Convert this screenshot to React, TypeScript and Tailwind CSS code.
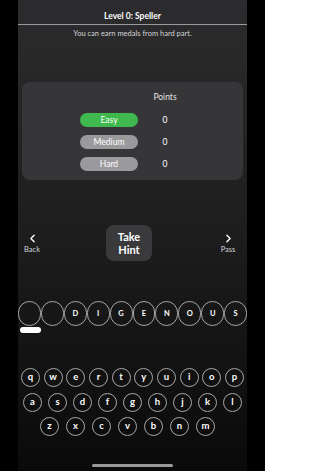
import { ChevronLeft, ChevronRight } from "lucide-react";

const FONT = { fontFamily: "Lato, 'Noto Sans', sans-serif" };

const SLOTS = ["", "", "D", "I", "G", "E", "N", "O", "U", "S"];
const ROW1 = ["q", "w", "e", "r", "t", "y", "u", "i", "o", "p"];
const ROW2 = ["a", "s", "d", "f", "g", "h", "j", "k", "l"];
const ROW3 = ["z", "x", "c", "v", "b", "n", "m"];

const LEVELS = [
  { name: "Easy", active: true },
  { name: "Medium", active: false },
  { name: "Hard", active: false },
];

function Key({ ch }: { ch: string }) {
  return (
    <div className="flex h-[19px] w-[19px] shrink-0 items-center justify-center rounded-full border border-[#a8a8aa] pb-[1px] text-[9.5px] font-bold leading-none text-white">
      {ch}
    </div>
  );
}

export default function App() {
  return (
    <div className="flex h-[471px] w-[265px] justify-center bg-black" style={FONT}>
      <div className="flex h-full w-[229px] flex-col bg-linear-to-b from-[#2c2c2e] via-[#1d1d1e] to-[#0a0a0a]">
        {/* Header */}
        <div className="h-[25px] border-b border-[#9a9a9c] pt-[11px] text-center text-[8.5px] font-bold leading-[10px] text-white">
          Level 0: Speller
        </div>
        <p className="mt-[4px] text-center text-[7.5px] leading-[10px] text-[#d4d4d6]">
          You can earn medals from hard part.
        </p>

        {/* Points card */}
        <div className="mx-[4px] mt-[43px] h-[98px] rounded-[8px] bg-[#3a3a3c]/85 pt-[10px]">
          <div className="flex">
            <div className="w-[116px]" />
            <div className="w-[54px] text-center text-[8.5px] leading-[10px] text-[#e4e4e6]">Points</div>
          </div>
          <div className="mt-[11px] flex flex-col gap-[8px]">
            {LEVELS.map((l) => (
              <div key={l.name} className="flex items-center">
                <div className="w-[58px]" />
                <div
                  className={`flex h-[14px] w-[58px] items-center justify-center rounded-full text-[8.5px] leading-none text-white ${
                    l.active ? "bg-[#3fb94e]" : "bg-[#9a9a9c]"
                  }`}
                >
                  {l.name}
                </div>
                <div className="w-[54px] text-center text-[8.5px] leading-none text-white">0</div>
              </div>
            ))}
          </div>
        </div>

        {/* Controls */}
        <div className="mt-[45px] flex h-[36px] items-center">
          <div className="flex w-[28px] flex-col items-center text-[#d4d4d6]">
            <ChevronLeft size={13} strokeWidth={2.5} className="text-white" />
            <span className="mt-[1px] text-[7.5px] leading-none">Back</span>
          </div>
          <div className="ml-[60px] flex h-[36px] w-[46px] flex-col items-center justify-center rounded-[8px] bg-[#3a3a3c] text-[11px] font-bold leading-[13px] text-white">
            <span>Take</span>
            <span>Hint</span>
          </div>
          <div className="ml-[62px] flex w-[28px] flex-col items-center text-[#d4d4d6]">
            <ChevronRight size={13} strokeWidth={2.5} className="text-white" />
            <span className="mt-[1px] text-[7.5px] leading-none">Pass</span>
          </div>
        </div>

        {/* Answer slots */}
        <div className="mt-[40px] flex h-[25px]">
          {SLOTS.map((s, i) => (
            <div
              key={i}
              className="flex h-[25px] flex-1 items-center justify-center rounded-full border border-[#a8a8aa] text-[7.5px] font-bold leading-none text-white"
            >
              {s}
            </div>
          ))}
        </div>
        <div className="ml-[2px] mt-[1px] h-[6px] w-[21px] rounded-full bg-white" />

        {/* Keyboard */}
        <div className="mt-[35px] flex justify-between px-[3px]">
          {ROW1.map((k) => (
            <Key key={k} ch={k} />
          ))}
        </div>
        <div className="mt-[6px] flex justify-between px-[5px]">
          {ROW2.map((k) => (
            <Key key={k} ch={k} />
          ))}
        </div>
        <div className="mt-[5px] flex justify-between pl-[22px] pr-[32px]">
          {ROW3.map((k) => (
            <Key key={k} ch={k} />
          ))}
        </div>

        {/* Home indicator */}
        <div className="mx-auto mt-[28px] h-[3px] w-[81px] rounded-full bg-[#9a9a9c]" />
      </div>
    </div>
  );
}
